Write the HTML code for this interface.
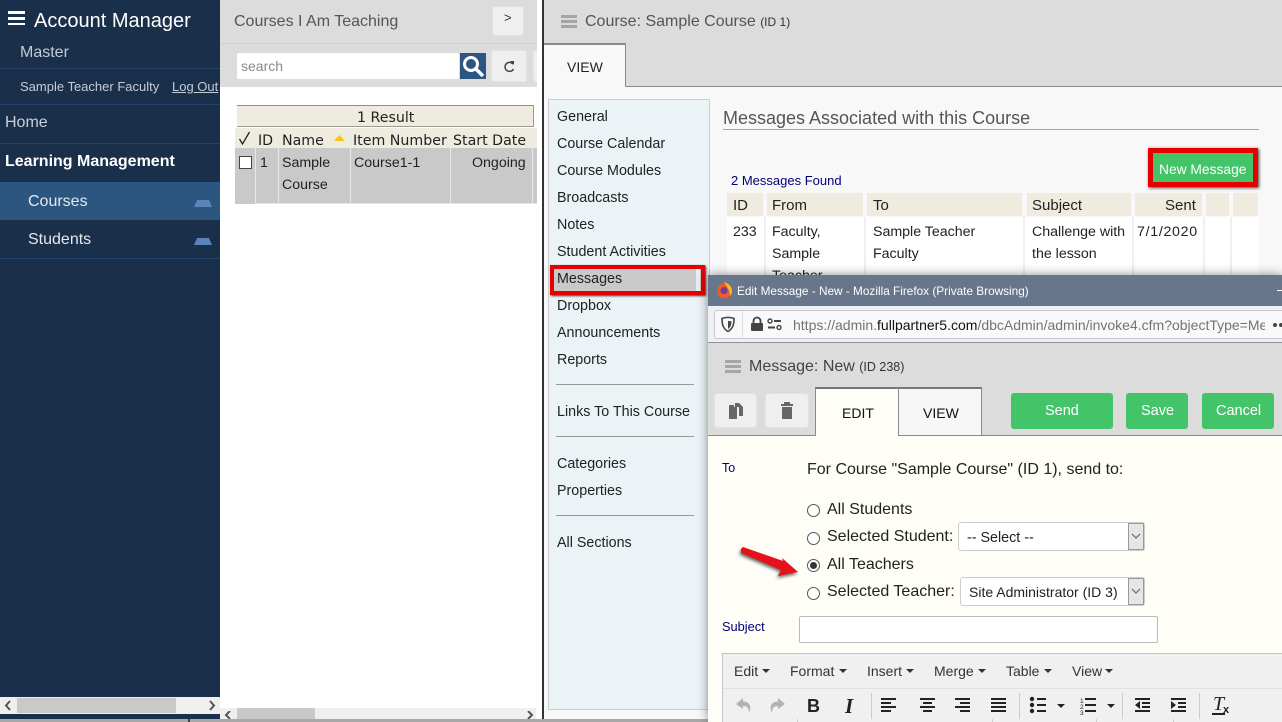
<!DOCTYPE html>
<html><head><meta charset="utf-8"><title>Account Manager</title>
<style>
html,body{margin:0;padding:0;width:1282px;height:722px;overflow:hidden;background:#fff;font-family:"Liberation Sans",sans-serif}
.a{position:absolute}
.t{position:absolute;white-space:nowrap;line-height:18px}
.nav{font-size:14.3px;color:#222;left:557px}
.th{position:absolute;background:#efebdf;top:193px;height:23px}
.cell{font-size:14.2px;color:#222}
.v{font-family:"DejaVu Sans",sans-serif;font-size:14.2px;color:#222}
.rad{position:absolute;left:807px;width:11px;height:11px;border:1px solid #555;border-radius:50%;background:#fff}
.menu{font-size:14px;color:#333;top:662px}
.car{position:absolute;width:0;height:0;border-left:4px solid transparent;border-right:4px solid transparent;border-top:4px solid #333}
.sep{position:absolute;width:1px;background:#ccc;top:693px;height:26px}
.tick{position:absolute;width:1px;background:#ccc;top:719px;height:3px}
</style></head><body>

<!-- sidebar -->
<div class="a" style="left:0;top:0;width:220px;height:719px;background:#1a2f4a"></div>
<div class="a" style="left:8px;top:11px;width:17px;height:3px;background:#fff"></div>
<div class="a" style="left:8px;top:17px;width:17px;height:3px;background:#fff"></div>
<div class="a" style="left:8px;top:23px;width:17px;height:2px;background:#fff"></div>
<div class="t" style="left:34px;top:10px;font-size:20px;line-height:22px;color:#fff">Account Manager</div>
<div class="t" style="left:20px;top:44px;font-size:16px;color:#c3ccd6">Master</div>
<div class="a" style="left:0;top:68px;width:220px;height:1px;background:#24456b"></div>
<div class="t" style="left:20px;top:78px;font-size:13px;color:#c3ccd6">Sample Teacher Faculty</div>
<div class="t" style="left:172px;top:78px;font-size:13px;color:#c3ccd6;text-decoration:underline">Log Out</div>
<div class="a" style="left:0;top:104px;width:220px;height:1px;background:#24456b"></div>
<div class="t" style="left:5px;top:114px;font-size:16px;color:#c9d1da">Home</div>
<div class="a" style="left:0;top:143px;width:220px;height:1px;background:#24456b"></div>
<div class="t" style="left:5px;top:153px;font-size:16px;font-weight:bold;color:#fff">Learning Management</div>
<div class="a" style="left:0;top:182px;width:220px;height:38px;background:#2c5580"></div>
<div class="t" style="left:28px;top:193px;font-size:16px;color:#e4e9ef">Courses</div>
<div class="t" style="left:28px;top:231px;font-size:16px;color:#e4e9ef">Students</div>
<div class="a" style="left:0;top:258px;width:220px;height:1px;background:#24456b"></div>
<svg class="a" style="left:194px;top:199px" width="18" height="9"><path d="M3 1h12l3 7H0z" fill="#5b83b8"/></svg>
<svg class="a" style="left:194px;top:237px" width="18" height="9"><path d="M3 1h12l3 7H0z" fill="#5b83b8"/></svg>
<!-- sidebar scrollbar -->
<div class="a" style="left:0;top:697px;width:220px;height:17px;background:#efefef"></div>
<div class="a" style="left:17px;top:698px;width:159px;height:15px;background:#c9c9c9"></div>
<svg class="a" style="left:3px;top:700px" width="10" height="11"><path d="M7 1L3 5.500 7 10" fill="none" stroke="#555" stroke-width="2"/></svg>
<svg class="a" style="left:207px;top:700px" width="10" height="11"><path d="M3 1l4 4.500L3 10" fill="none" stroke="#555" stroke-width="2"/></svg>

<!-- middle panel -->
<div class="a" style="left:220px;top:0;width:317px;height:87px;background:#dcdcdc"></div>
<div class="a" style="left:220px;top:43px;width:317px;height:1px;background:#cfcfcf"></div>
<div class="t" style="left:234px;top:13px;font-size:16px;color:#555">Courses I Am Teaching</div>
<div class="a" style="left:492px;top:6px;width:32px;height:30px;box-sizing:border-box;background:#efefef;border:1px solid #e2e2e2;border-radius:3px"></div>
<div class="t" style="left:504px;top:9px;font-size:13px;color:#333">&gt;</div>
<div class="a" style="left:237px;top:53px;width:222px;height:26px;background:#fff;border-radius:2px"></div>
<div class="t" style="left:241px;top:57px;font-size:14px;color:#888">search</div>
<div class="a" style="left:460px;top:53px;width:26px;height:26px;background:#2c5580"></div>
<svg class="a" style="left:460px;top:53px" width="26" height="26"><circle cx="11" cy="11" r="6.500" fill="none" stroke="#fff" stroke-width="3"/><path d="M16 16l7 7" stroke="#fff" stroke-width="3.500"/></svg>
<div class="a" style="left:491px;top:50px;width:36px;height:32px;box-sizing:border-box;background:#efefef;border:1px solid #e4e4e4;border-radius:3px"></div>
<svg class="a" style="left:503px;top:60px" width="13" height="13"><path d="M10 4A4.500 4.500 0 1 0 10.500 9" fill="none" stroke="#444" stroke-width="1.500"/><path d="M7 1l4 0v4z" fill="#444"/></svg>
<div class="a" style="left:533px;top:50px;width:4px;height:32px;background:#efefef;border:1px solid #e4e4e4;border-right:0;border-radius:3px 0 0 3px;box-sizing:border-box"></div>

<div class="a" style="left:237px;top:105px;width:297px;height:22px;background:#efebdf;border-top:1px solid #8f8f85;border-right:1px solid #9a9a90;border-bottom:1px solid #9a9a90;box-sizing:border-box"></div>
<div class="t v" style="left:357px;top:109px">1 Result</div>
<div class="a" style="left:235px;top:128px;width:302px;height:20px;background:#efebdf"></div>
<div class="a" style="left:235px;top:148px;width:302px;height:55px;background:#c9c9c9"></div>
<div class="a" style="left:235px;top:203px;width:20px;height:1px;background:#c9c9c9"></div>
<div class="a" style="left:255px;top:203px;width:282px;height:1px;background:#e6e6e6"></div>
<div class="a" style="left:255px;top:128px;width:1px;height:75px;background:#e8e8e8"></div>
<div class="a" style="left:278px;top:128px;width:1px;height:75px;background:#e8e8e8"></div>
<div class="a" style="left:350px;top:128px;width:1px;height:75px;background:#e8e8e8"></div>
<div class="a" style="left:450px;top:128px;width:1px;height:75px;background:#e8e8e8"></div>
<div class="a" style="left:532px;top:128px;width:1px;height:75px;background:#e8e8e8"></div>
<svg class="a" style="left:238px;top:131px" width="14" height="15"><path d="M1.500 8l3 5 7-12" fill="none" stroke="#222" stroke-width="1.300"/></svg>
<div class="t v" style="left:258px;top:132px">ID</div>
<div class="t v" style="left:282px;top:132px">Name</div>
<svg class="a" style="left:333px;top:135px" width="13" height="7"><path d="M6.500 0L12 6H1z" fill="#f5c518"/></svg>
<div class="t v" style="left:353px;top:132px">Item Number</div>
<div class="t v" style="left:453px;top:132px">Start Date</div>
<div class="a" style="left:239px;top:156px;width:11px;height:11px;background:#fff;border:1px solid #444"></div>
<div class="t cell" style="left:260px;top:154px">1</div>
<div class="t cell" style="left:282px;top:154px">Sample</div>
<div class="t cell" style="left:282px;top:176px">Course</div>
<div class="t cell" style="left:354px;top:154px">Course1-1</div>
<div class="t cell" style="left:472px;top:154px">Ongoing</div>
<!-- mid scrollbar -->
<div class="a" style="left:220px;top:708px;width:316px;height:11px;background:#efefef"></div>
<div class="a" style="left:237px;top:708px;width:78px;height:11px;background:#c9c9c9"></div>
<svg class="a" style="left:224px;top:711px" width="10" height="9"><path d="M6 0L2 4l4 4" fill="none" stroke="#555" stroke-width="2"/></svg>
<svg class="a" style="left:525px;top:711px" width="10" height="9"><path d="M3 0l4 4-4 4" fill="none" stroke="#555" stroke-width="2"/></svg>
<div class="a" style="left:0;top:719px;width:708px;height:3px;background:#a9a9a9"></div>
<div class="a" style="left:188px;top:719px;width:2px;height:3px;background:#444"></div>

<!-- right panel -->
<div class="a" style="left:542px;top:0;width:2px;height:719px;background:#333"></div>
<div class="a" style="left:544px;top:0;width:738px;height:86px;background:#dcdcdc"></div>
<div class="a" style="left:544px;top:87px;width:738px;height:632px;background:#f8f8f8"></div>
<div class="a" style="left:544px;top:86px;width:738px;height:1px;background:#8a8a8a"></div>
<div class="a" style="left:544px;top:43px;width:82px;height:44px;background:#f8f8f8;border-top:2px solid #8a8a8a;border-right:1px solid #8a8a8a;box-sizing:border-box"></div>
<div class="a" style="left:561px;top:15px;width:16px;height:3px;background:#a5a5a5;box-shadow:0 5px 0 #a5a5a5,0 10px 0 #a5a5a5"></div>
<div class="t" style="left:585px;top:13px;font-size:16px;color:#555">Course: Sample Course <span style="font-size:12px;color:#333">(ID 1)</span></div>
<div class="t" style="left:567px;top:58px;font-size:14px;color:#222">VIEW</div>

<div class="a" style="left:548px;top:99px;width:162px;height:611px;box-sizing:border-box;background:#ebf3f7;border:1px solid #c9cfd2"></div>
<div class="t nav" style="top:108px">General</div>
<div class="t nav" style="top:135px">Course Calendar</div>
<div class="t nav" style="top:162px">Course Modules</div>
<div class="t nav" style="top:189px">Broadcasts</div>
<div class="t nav" style="top:216px">Notes</div>
<div class="t nav" style="top:243px">Student Activities</div>
<div class="a" style="left:550px;top:265px;width:155px;height:30px;box-sizing:border-box;border:4px solid #e60000;background:#c9c9c9;box-shadow:1px 1px 2px #333"></div>
<div class="a" style="left:696px;top:269px;width:4px;height:22px;background:#e8eef1"></div>
<div class="t nav" style="top:270px">Messages</div>
<div class="t nav" style="top:297px">Dropbox</div>
<div class="t nav" style="top:324px">Announcements</div>
<div class="t nav" style="top:351px">Reports</div>
<div class="a" style="left:556px;top:384px;width:138px;height:1px;background:#999"></div>
<div class="t nav" style="top:403px">Links To This Course</div>
<div class="a" style="left:556px;top:436px;width:138px;height:1px;background:#999"></div>
<div class="t nav" style="top:455px">Categories</div>
<div class="t nav" style="top:482px">Properties</div>
<div class="a" style="left:556px;top:515px;width:138px;height:1px;background:#999"></div>
<div class="t nav" style="top:534px">All Sections</div>

<div class="t" style="left:723px;top:108px;font-size:18px;line-height:20px;color:#555">Messages Associated with this Course</div>
<div class="a" style="left:723px;top:129px;width:536px;height:1px;background:#a5a5a5"></div>
<div class="a" style="left:1148px;top:148px;width:110px;height:39px;box-sizing:border-box;border:5px solid #e60000;background:#43c468;box-shadow:1px 1px 3px #444"></div>
<div class="t" style="left:1159px;top:161px;font-size:13.800px;color:#fff">New Message</div>
<div class="t" style="left:731px;top:172px;font-size:13px;color:#00007a">2 Messages Found</div>
<div class="th" style="left:727px;width:36px"></div>
<div class="th" style="left:767px;width:96px"></div>
<div class="th" style="left:867px;width:155px"></div>
<div class="th" style="left:1027px;width:104px"></div>
<div class="th" style="left:1135px;width:67px"></div>
<div class="th" style="left:1206px;width:23px"></div>
<div class="th" style="left:1233px;width:25px"></div>
<div class="a" style="left:727px;top:217px;width:531px;height:60px;background:#fff"></div>
<div class="a" style="left:764px;top:217px;width:2px;height:60px;background:#f0f0f0"></div>
<div class="a" style="left:864px;top:217px;width:2px;height:60px;background:#f0f0f0"></div>
<div class="a" style="left:1023px;top:217px;width:2px;height:60px;background:#f0f0f0"></div>
<div class="a" style="left:1132px;top:217px;width:2px;height:60px;background:#f0f0f0"></div>
<div class="a" style="left:1203px;top:217px;width:2px;height:60px;background:#f0f0f0"></div>
<div class="a" style="left:1230px;top:217px;width:2px;height:60px;background:#f0f0f0"></div>
<div class="t cell" style="left:733px;top:197px;font-size:15px">ID</div>
<div class="t cell" style="left:772px;top:197px;font-size:15px">From</div>
<div class="t cell" style="left:873px;top:197px;font-size:15px">To</div>
<div class="t cell" style="left:1032px;top:197px;font-size:15px">Subject</div>
<div class="t cell" style="left:1165px;top:197px;font-size:15px">Sent</div>
<div class="t cell" style="left:733px;top:223px">233</div>
<div class="t cell" style="left:772px;top:223px">Faculty,</div>
<div class="t cell" style="left:772px;top:245px">Sample</div>
<div class="t cell" style="left:772px;top:267px">Teacher</div>
<div class="t cell" style="left:873px;top:223px">Sample Teacher</div>
<div class="t cell" style="left:873px;top:245px">Faculty</div>
<div class="t cell" style="left:1032px;top:223px">Challenge with</div>
<div class="t cell" style="left:1032px;top:245px">the lesson</div>
<div class="t cell" style="left:1137px;top:223px;letter-spacing:.7px">7/1/2020</div>

<!-- popup -->
<div class="a" style="left:708px;top:275px;width:574px;height:447px;background:#fefef6;box-shadow:0 0 10px rgba(0,0,0,.45)"></div>
<div class="a" style="left:708px;top:275px;width:574px;height:31px;background:#67768a"></div>
<svg class="a" style="left:715px;top:281px" width="19" height="19"><circle cx="9.500" cy="10" r="7.500" fill="#f0592a"/><path d="M9 1c4 1 8 4 8 9 0 3-1 4-2 5 0-5-2-8-6-14z" fill="#fdb32b"/><circle cx="9" cy="9.500" r="3.500" fill="#6b3fa0"/></svg>
<div class="t" style="left:737px;top:282px;font-size:11.800px;color:#fff">Edit Message - New - Mozilla Firefox (Private Browsing)</div>
<div class="a" style="left:1277px;top:290px;width:5px;height:1px;background:#fff"></div>
<div class="a" style="left:708px;top:306px;width:574px;height:37px;background:#f0f0f4;border-bottom:1px solid #8f8f9d;box-sizing:border-box"></div>
<div class="a" style="left:714px;top:310px;width:568px;height:29px;background:#f9f9fb;border:1px solid #c6c6cc;border-right:0;box-sizing:border-box;border-radius:3px 0 0 3px"></div>
<svg class="a" style="left:720px;top:316px" width="16" height="17"><path d="M2 2.500c4-1.500 8-1.500 12 0 0 6-1 10-6 13-5-3-6-7-6-13z" fill="none" stroke="#444" stroke-width="1.600"/><path d="M8 5c1 0 2.500 0 3.500.5 0 3-1 6-3.500 7.500z" fill="#444"/></svg>
<div class="a" style="left:742px;top:311px;width:1px;height:26px;background:#ddd"></div>
<svg class="a" style="left:750px;top:316px" width="14" height="16"><path d="M3.500 7V5a3.500 3.500 0 0 1 7 0v2" fill="none" stroke="#444" stroke-width="1.800"/><rect x="1" y="7" width="12" height="8" rx="1" fill="#444"/></svg>
<svg class="a" style="left:767px;top:318px" width="15" height="13"><circle cx="3" cy="3" r="2" fill="none" stroke="#444" stroke-width="1.400"/><rect x="7" y="2" width="7" height="2" fill="#444"/><rect x="1" y="8.500" width="7" height="2" fill="#444"/><circle cx="12" cy="9.500" r="2" fill="none" stroke="#444" stroke-width="1.400"/></svg>
<div class="t" style="left:793px;top:316px;width:472px;overflow:hidden;font-size:14px;color:#737373">https://admin.<span style="color:#111">fullpartner5.com</span>/dbcAdmin/admin/invoke4.cfm?objectType=Message</div>
<div class="a" style="left:1273px;top:323px;width:4px;height:4px;border-radius:50%;background:#444;box-shadow:6px 0 0 #444"></div>

<div class="a" style="left:708px;top:343px;width:574px;height:93px;background:#dcdcdc"></div>
<div class="a" style="left:725px;top:360px;width:16px;height:3px;background:#a5a5a5;box-shadow:0 5px 0 #a5a5a5,0 10px 0 #a5a5a5"></div>
<div class="t" style="left:749px;top:358px;font-size:16px;color:#444">Message: New <span style="font-size:12.500px;color:#333">(ID 238)</span></div>
<div class="a" style="left:714px;top:393px;width:43px;height:35px;background:#efefef;border:1px solid #e4e4e4;border-radius:4px;box-sizing:border-box"></div>
<div class="a" style="left:765px;top:393px;width:44px;height:35px;background:#efefef;border:1px solid #e4e4e4;border-radius:4px;box-sizing:border-box"></div>
<svg class="a" style="left:728px;top:402px" width="16" height="18"><path d="M1 3h5v2h3v12H1z" fill="#666"/><path d="M7 1h4l4 4v9h-4V5H7z" fill="#666"/></svg>
<svg class="a" style="left:780px;top:402px" width="14" height="17"><rect x="1" y="2" width="12" height="2" fill="#666"/><rect x="4" y="0" width="6" height="2" fill="#666"/><path d="M2 5h10v12H2z" fill="#666"/></svg>
<div class="a" style="left:815px;top:387px;width:84px;height:49px;background:#fefef6;border-top:2px solid #777;border-left:1px solid #8a8a8a;border-right:1px solid #8a8a8a;box-sizing:border-box"></div>
<div class="a" style="left:899px;top:387px;width:83px;height:48px;background:#f7f7f7;border-top:2px solid #777;border-right:1px solid #8a8a8a;box-sizing:border-box"></div>
<div class="a" style="left:708px;top:435px;width:107px;height:1px;background:#8a8a8a"></div>
<div class="a" style="left:899px;top:435px;width:383px;height:1px;background:#8a8a8a"></div>
<div class="t" style="left:842px;top:404px;font-size:14px;color:#111">EDIT</div>
<div class="t" style="left:923px;top:404px;font-size:14px;color:#111">VIEW</div>
<div class="a" style="left:1011px;top:393px;width:102px;height:36px;background:#43c468;border-radius:3px"></div>
<div class="a" style="left:1126px;top:393px;width:62px;height:36px;background:#43c468;border-radius:3px"></div>
<div class="a" style="left:1202px;top:393px;width:72px;height:36px;background:#43c468;border-radius:3px"></div>
<div class="t" style="left:1045px;top:402px;font-size:14.500px;color:#fff">Send</div>
<div class="t" style="left:1141px;top:402px;font-size:14.500px;color:#fff">Save</div>
<div class="t" style="left:1216px;top:402px;font-size:14.500px;color:#fff">Cancel</div>

<div class="t" style="left:722px;top:459px;font-size:12.500px;color:#00007a">To</div>
<div class="t" style="left:807px;top:461px;font-size:16px;color:#222">For Course "Sample Course" (ID 1), send to:</div>
<div class="rad" style="top:504px"></div>
<div class="t" style="left:827px;top:501px;font-size:16px;color:#222">All Students</div>
<div class="rad" style="top:532px"></div>
<div class="t" style="left:827px;top:528px;font-size:16px;color:#222">Selected Student:</div>
<div class="a" style="left:958px;top:522px;width:187px;height:29px;background:#fff;border:1px solid #ccc;border-radius:3px;box-sizing:border-box"></div>
<div class="t" style="left:967px;top:529px;font-size:14.300px;color:#222">-- Select --</div>
<div class="a" style="left:1128px;top:523px;width:16px;height:27px;background:#e6e6e6;border:1px solid #999;box-sizing:border-box"></div>
<svg class="a" style="left:1131px;top:533px" width="10" height="7"><path d="M1 1l4 4 4-4" fill="none" stroke="#666" stroke-width="1.200"/></svg>
<div class="rad" style="top:559px"></div>
<div class="a" style="left:810px;top:562px;width:7px;height:7px;border-radius:50%;background:#333"></div>
<div class="t" style="left:827px;top:556px;font-size:16px;color:#222">All Teachers</div>
<div class="rad" style="top:587px"></div>
<div class="t" style="left:827px;top:583px;font-size:16px;color:#222">Selected Teacher:</div>
<div class="a" style="left:960px;top:577px;width:185px;height:29px;background:#fff;border:1px solid #ccc;border-radius:3px;box-sizing:border-box"></div>
<div class="t" style="left:969px;top:583px;font-size:14px;color:#222">Site Administrator (ID 3)</div>
<div class="a" style="left:1128px;top:578px;width:16px;height:27px;background:#e6e6e6;border:1px solid #999;box-sizing:border-box"></div>
<svg class="a" style="left:1131px;top:588px" width="10" height="7"><path d="M1 1l4 4 4-4" fill="none" stroke="#666" stroke-width="1.200"/></svg>
<svg class="a" style="left:735px;top:544px;filter:drop-shadow(-1px 2px 1.500px rgba(0,0,0,.6))" width="65" height="36"><path d="M6 5L8 3L48 17L47 14L63 28L43 32L46 26L6 9Z" fill="#e8101a"/></svg>
<div class="t" style="left:722px;top:618px;font-size:12.800px;color:#00007a">Subject</div>
<div class="a" style="left:799px;top:616px;width:359px;height:27px;background:#fff;border:1px solid #bbb;border-radius:2px;box-sizing:border-box"></div>

<div class="a" style="left:722px;top:653px;width:560px;height:69px;background:#f0f0f0;border:1px solid #c5c5c5;border-right:0;border-bottom:0;box-sizing:border-box"></div>
<div class="a" style="left:723px;top:688px;width:559px;height:1px;background:#e2e2e2"></div>
<div class="t menu" style="left:734px">Edit</div><div class="car" style="left:762px;top:669px"></div>
<div class="t menu" style="left:790px">Format</div><div class="car" style="left:839px;top:669px"></div>
<div class="t menu" style="left:867px">Insert</div><div class="car" style="left:906px;top:669px"></div>
<div class="t menu" style="left:934px">Merge</div><div class="car" style="left:978px;top:669px"></div>
<div class="t menu" style="left:1006px">Table</div><div class="car" style="left:1044px;top:669px"></div>
<div class="t menu" style="left:1072px">View</div><div class="car" style="left:1105px;top:669px"></div>
<svg class="a" style="left:722px;top:692px" width="560" height="30">
<path d="M8 1L1 7L8 12V9C12 9 14 11 14 16C17 10 15 4.500 8 4.500Z" fill="#b3b3b3" transform="translate(13 5)"/>
<path d="M8 1L1 7L8 12V9C12 9 14 11 14 16C17 10 15 4.500 8 4.500Z" fill="#b3b3b3" transform="translate(64 5) scale(-1 1)"/>
<g fill="#222">
<rect x="159" y="6" width="15" height="2"/><rect x="159" y="10" width="10" height="2"/><rect x="159" y="14" width="15" height="2"/><rect x="159" y="18" width="10" height="2"/>
<rect x="198" y="6" width="15" height="2"/><rect x="201" y="10" width="9" height="2"/><rect x="198" y="14" width="15" height="2"/><rect x="201" y="18" width="9" height="2"/>
<rect x="233" y="6" width="15" height="2"/><rect x="238" y="10" width="10" height="2"/><rect x="233" y="14" width="15" height="2"/><rect x="238" y="18" width="10" height="2"/>
<rect x="269" y="6" width="15" height="2"/><rect x="269" y="10" width="15" height="2"/><rect x="269" y="14" width="15" height="2"/><rect x="269" y="18" width="15" height="2"/>
<circle cx="310" cy="7" r="2.200"/><circle cx="310" cy="13" r="2.200"/><circle cx="310" cy="19" r="2.200"/>
<rect x="315" y="6" width="9" height="2"/><rect x="315" y="12" width="9" height="2"/><rect x="315" y="18" width="9" height="2"/>
<path d="M335 12h8l-4 4z"/>
<text x="358" y="11" font-size="6.500" font-family="Liberation Sans">1</text><text x="358" y="17" font-size="6.500" font-family="Liberation Sans">2</text><text x="358" y="23" font-size="6.500" font-family="Liberation Sans">3</text>
<rect x="363" y="6" width="11" height="2"/><rect x="363" y="12" width="11" height="2"/><rect x="363" y="18" width="11" height="2"/>
<path d="M385 12h8l-4 4z"/>
<rect x="413" y="6" width="15" height="2"/><rect x="420" y="10" width="8" height="2"/><rect x="420" y="14" width="8" height="2"/><rect x="413" y="18" width="15" height="2"/><path d="M418 9v8l-5-4z"/>
<rect x="449" y="6" width="15" height="2"/><rect x="456" y="10" width="8" height="2"/><rect x="456" y="14" width="8" height="2"/><rect x="449" y="18" width="15" height="2"/><path d="M449 9v8l5-4z"/>
<rect x="490" y="21" width="13" height="2"/>
</g>
</svg>
<div class="t" style="left:807px;top:697px;font-size:18px;font-weight:bold;color:#222">B</div>
<div class="t" style="left:845px;top:697px;font-size:21px;font-weight:bold;font-style:italic;font-family:'Liberation Serif',serif;color:#222">I</div>
<div class="t" style="left:1213px;top:695px;font-size:20px;font-style:italic;font-family:'Liberation Serif',serif;color:#222">T</div>
<div class="t" style="left:1223px;top:701px;font-size:11px;font-weight:bold;color:#222">x</div>
<div class="sep" style="left:871px"></div>
<div class="sep" style="left:1019px"></div>
<div class="sep" style="left:1122px"></div>
<div class="sep" style="left:1199px"></div>
<div class="tick" style="left:797px"></div>
<div class="tick" style="left:992px"></div>
<div class="tick" style="left:1096px"></div>
<div class="tick" style="left:1173px"></div>
</body></html>
